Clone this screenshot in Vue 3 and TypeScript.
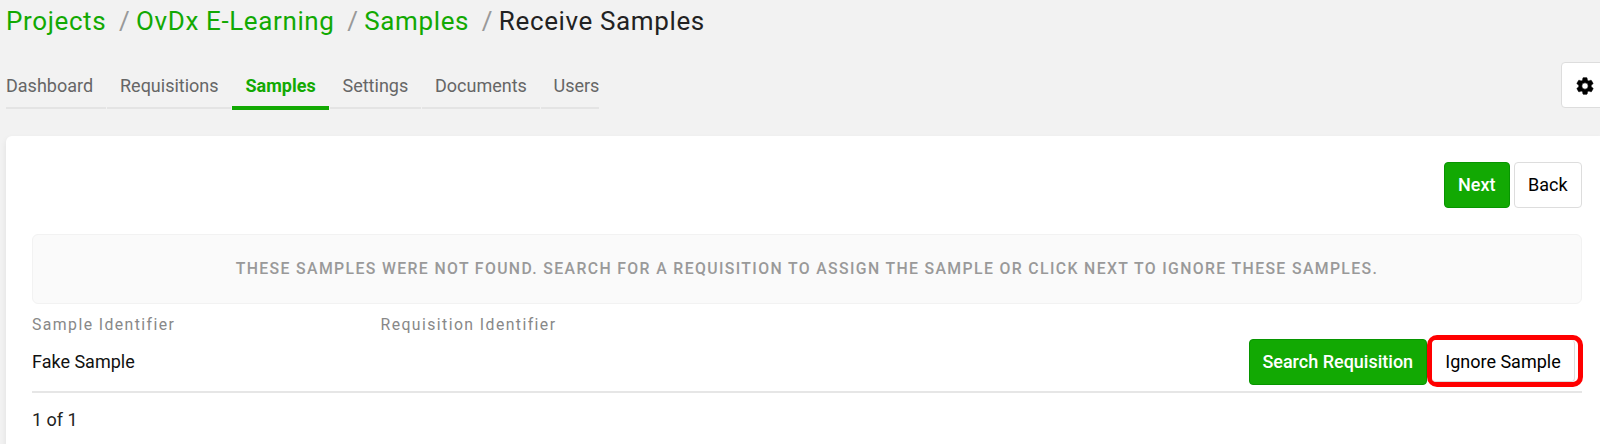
<script setup lang="ts">
interface Tab {
  label: string
  name: string
}

const trail: string[] = ['Projects', 'OvDx E-Learning', 'Samples']
const tabs: Tab[] = [
  { label: 'Dashboard', name: 'dashboard' },
  { label: 'Requisitions', name: 'requisitions' },
  { label: 'Samples', name: 'samples' },
  { label: 'Settings', name: 'settings' },
  { label: 'Documents', name: 'documents' },
  { label: 'Users', name: 'users' },
]
const activeTab = 'samples'
</script>

<template>
  <div class="page">
    <nav class="breadcrumb">
      <template v-for="item in trail" :key="item">
        <a class="crumb">{{ item }}</a>
        <span class="slash">/</span>
      </template>
      <span class="current">Receive Samples</span>
    </nav>

    <div class="toolbar">
      <nav class="tabs">
        <a
          v-for="tab in tabs"
          :key="tab.name"
          class="tab"
          :class="[tab.name, { active: tab.name === activeTab }]"
        >{{ tab.label }}</a>
      </nav>
      <button class="btn gear" aria-label="Settings">
        <svg width="20" height="20" viewBox="0 0 24 24">
          <path
            fill="#000"
            fill-rule="evenodd"
            stroke="#000"
            stroke-width=".7"
            stroke-linejoin="round"
            d="M19.4 13a7.500 7.500 0 0 0 0-2l2.100-1.600a.5.5 0 0 0 .12-.64l-2-3.460a.5.5 0 0 0-.6-.22l-2.500 1a7.300 7.300 0 0 0-1.700-.98l-.37-2.650A.5.5 0 0 0 14 2h-4a.5.5 0 0 0-.5.420l-.37 2.650c-.6.250-1.170.580-1.700.980l-2.500-1a.5.5 0 0 0-.6.220l-2 3.460a.5.5 0 0 0 .12.640L4.600 11a7.500 7.500 0 0 0 0 2l-2.100 1.650a.5.5 0 0 0-.12.640l2 3.460c.12.220.38.300.6.220l2.500-1c.52.400 1.080.730 1.700.980l.37 2.650c.04.240.25.420.5.420h4c.25 0 .46-.18.5-.42l.37-2.650a7.300 7.300 0 0 0 1.700-.98l2.500 1c.22.080.48 0 .6-.22l2-3.460a.5.5 0 0 0-.12-.64zM12 15.800a3.800 3.800 0 1 1 0-7.600 3.800 3.800 0 0 1 0 7.600z"
          />
        </svg>
      </button>
    </div>

    <main class="card">
      <div class="actions">
        <button class="btn primary next">Next</button>
        <button class="btn back">Back</button>
      </div>
      <div class="message">
        <span>These samples were not found. Search for a requisition to assign the sample or click next to ignore these samples.</span>
      </div>
      <div class="row head">
        <span class="sample-head">Sample Identifier</span>
        <span class="requisition-head">Requisition Identifier</span>
      </div>
      <div class="row item">
        <span class="sample-name">Fake Sample</span>
        <div class="row-actions">
          <button class="btn primary search">Search Requisition</button>
          <div class="highlight">
            <button class="btn ignore">Ignore Sample</button>
          </div>
        </div>
      </div>
      <div class="count">1 of 1</div>
    </main>
  </div>
</template>

<style>
body {
  margin: 0;
  overflow: hidden;
}
</style>

<style scoped>
.page {
  box-sizing: border-box;
  width: 1600px;
  height: 444px;
  overflow: hidden;
  padding-left: 6px;
  background: #f2f2f2;
  font-family: Roboto, "Liberation Sans", sans-serif;
  font-size: 18px;
  color: #111;
}
.breadcrumb {
  display: flex;
  height: 42px;
  line-height: 42px;
  font-size: 26px;
  letter-spacing: 0.62px;
  white-space: nowrap;
}
.crumb {
  color: #12a903;
}
.slash {
  margin: 0 6.3px 0 12.7px;
  color: #999;
  letter-spacing: 0;
}
.current {
  color: #222;
}
.toolbar {
  display: flex;
  justify-content: space-between;
  align-items: flex-start;
  height: 94px;
}
.tabs {
  display: flex;
  gap: 1px;
  padding-top: 20px;
}
.tab {
  box-sizing: border-box;
  height: 47px;
  line-height: 47px;
  padding-left: 13px;
  border-bottom: 2px solid #e4e4e4;
  color: #666;
  white-space: nowrap;
}
.dashboard {
  width: 100px;
  padding-left: 0;
}
.requisitions { width: 124px; }
.samples { width: 97px; }
.settings {
  width: 91px;
  padding-left: 12.5px;
}
.documents { width: 118px; }
.users {
  width: 58px;
  padding-left: 12.5px;
}
.tab.active {
  height: 48px;
  padding-left: 13.5px;
  border-bottom: 4px solid #12a903;
  color: #12a903;
  font-weight: 700;
}
.btn {
  box-sizing: border-box;
  height: 46px;
  padding: 0 0 2px;
  border: 1px solid #ddd;
  border-radius: 4px;
  background: #fff;
  color: #000;
  font: inherit;
  white-space: nowrap;
}
.btn.primary {
  border-color: #079500;
  background: #12a903;
  color: #fff;
  font-weight: 500;
}
.btn.gear {
  display: flex;
  align-items: center;
  width: 46px;
  margin: 20px -7px 0 0;
  padding: 1px 0 0 12.5px;
}
.card {
  box-sizing: border-box;
  height: 320px;
  padding: 26px 18px 0 26px;
  border-radius: 6px 0 0 0;
  background: #fff;
  box-shadow: 0 3px 6px rgba(0, 0, 0, 0.08);
}
.actions {
  display: flex;
  justify-content: flex-end;
  gap: 4px;
  height: 72px;
}
.next { width: 65.5px; }
.back { width: 68.5px; }
.message {
  box-sizing: border-box;
  height: 70px;
  border: 1px solid #f2f2f2;
  border-radius: 6px;
  background: #fafafa;
  color: #999;
  font-size: 15.8px;
  font-weight: 500;
  line-height: 68px;
  letter-spacing: 1.37px;
  text-align: center;
  text-transform: uppercase;
  white-space: nowrap;
}
.row {
  display: flex;
}
.head {
  height: 30px;
  line-height: 41px;
  font-size: 15.8px;
  letter-spacing: 1.42px;
  color: #888;
}
.sample-head {
  width: 348.5px;
}
.item {
  box-sizing: border-box;
  height: 59px;
  justify-content: space-between;
  border-bottom: 2px solid #e6e6e6;
}
.sample-name {
  line-height: 56px;
}
.row-actions {
  display: flex;
  align-items: flex-start;
  margin-right: -1px;
}
.search {
  width: 178.5px;
  margin-top: 5px;
}
.highlight {
  box-sizing: border-box;
  width: 156px;
  height: 52px;
  margin-top: 1px;
  border: 5px solid #f00;
  border-radius: 10px;
}
.btn.ignore {
  display: block;
  width: 143px;
  height: 42px;
  padding: 2px 0 0;
  border-width: 0 1px 1px 0;
}
.count {
  line-height: 54px;
  color: #222;
}
</style>
